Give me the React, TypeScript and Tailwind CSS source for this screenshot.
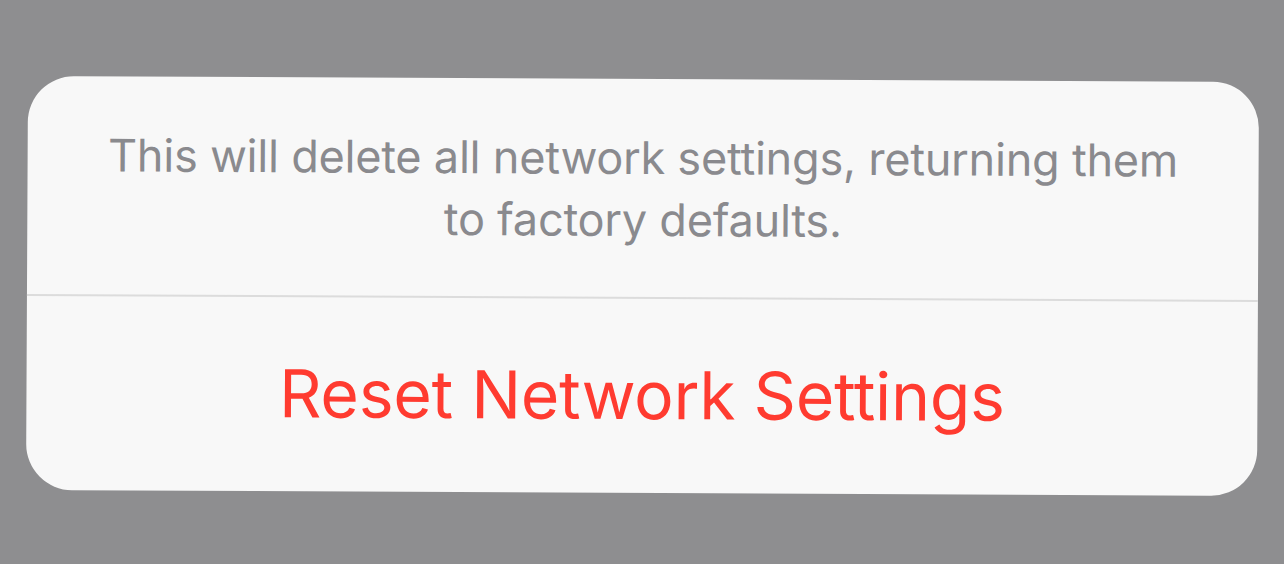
import React from 'react';

export default function App() {
  return (
    <div
      className="w-[1284px] h-[564px] bg-[#8e8e90] flex flex-col pt-[79px] pl-[27px]"
      style={{ fontFamily: 'Inter, "Noto Sans", sans-serif' }}
    >
      <div className="w-[1231px] h-[414px] bg-[#f8f8f8] rounded-[46px] flex flex-col rotate-[0.28deg]">
        <div className="h-[218px] flex items-center justify-center px-12 pt-[1px]">
          <p className="text-[45px] leading-[62px] text-[#8a8a8e] text-center tracking-[-0.2px]">
            This will delete all network settings, returning them
            <br />
            to factory defaults.
          </p>
        </div>
        <div className="h-[1.5px] bg-[#dcdcdc]" />
        <button className="flex-1 flex items-center justify-center text-[66px] text-[#ff3b30] tracking-[-0.2px]">
          Reset Network Settings
        </button>
      </div>
    </div>
  );
}
